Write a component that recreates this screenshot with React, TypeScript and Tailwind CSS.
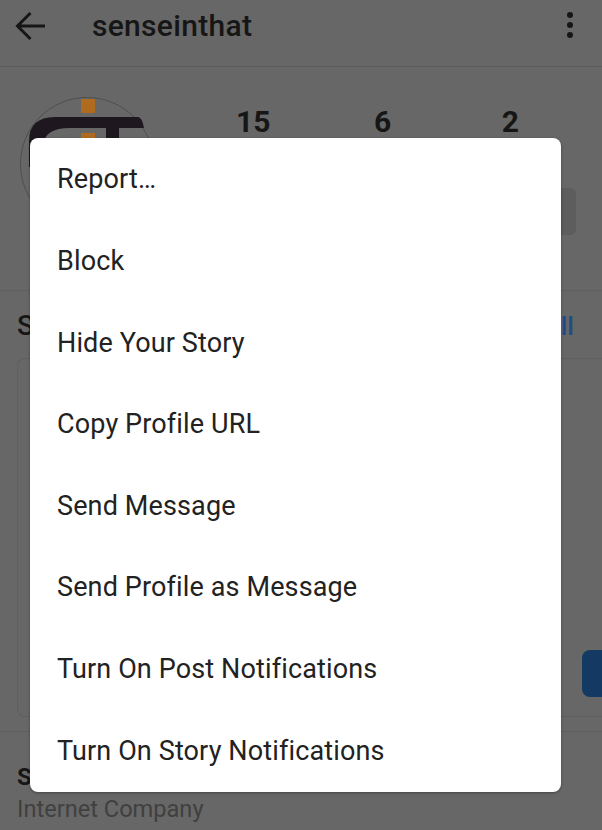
import React from "react";

const items = [
  "Report…",
  "Block",
  "Hide Your Story",
  "Copy Profile URL",
  "Send Message",
  "Send Profile as Message",
  "Turn On Post Notifications",
  "Turn On Story Notifications",
];

function Logo() {
  return (
    <svg width="134" height="134" viewBox="0 0 134 134" className="shrink-0">
      <circle cx="67" cy="67" r="66.5" fill="none" stroke="#4f4f4f" strokeWidth="1" />
      <rect x="61" y="2" width="14" height="14" fill="#b06c1e" />
      <rect x="61" y="36" width="14" height="14" fill="#b06c1e" />
      <path d="M9 70 V44 Q9 20 35 20 H118 Q122 20 124 31 H50 Q24 31 24 48 V70 Z" fill="#1e1720" />
      <rect x="86" y="28" width="13" height="30" fill="#1e1720" />
    </svg>
  );
}

export default function App() {
  return (
    <div className="relative flex h-[830px] w-[602px] flex-col overflow-hidden bg-[#676767] font-['Roboto',sans-serif]">
      <header className="flex h-[67px] shrink-0 items-start border-b border-[#5a5a5a] pl-[15px] pr-[29px] pt-[11px]">
        <svg width="31" height="30" viewBox="0 0 31 30" fill="none" stroke="#161616" strokeWidth="3" className="shrink-0">
          <path d="M30 15 H3 M15.5 2 L2.5 15 L15.5 28" />
        </svg>
        <span className="ml-[46px] text-[30px] font-medium leading-[30px] tracking-[0.3px] text-[#161616]">senseinthat</span>
        <div className="ml-auto mt-[1px] flex flex-col gap-[4px]">
          <span className="h-[6px] w-[6px] rounded-full bg-[#161616]" />
          <span className="h-[6px] w-[6px] rounded-full bg-[#161616]" />
          <span className="h-[6px] w-[6px] rounded-full bg-[#161616]" />
        </div>
      </header>

      <section className="flex h-[224px] shrink-0 border-b border-[#5f5f5f] pl-[20px] pt-[30px]">
        <Logo />
        <div className="ml-[28px] flex w-[394px] flex-col pt-[10px]">
          <div className="grid grid-cols-3 text-center text-[30px] font-bold leading-[30px] text-[#161616]">
            <span className="pl-[11px]">15</span>
            <span className="pl-[7px]">6</span>
            <span className="pl-[0px]">2</span>
          </div>
          <div className="mt-[51px] h-[47px] w-full rounded-[6px] bg-[#5d5d5d]" />
        </div>
      </section>

      <div className="flex h-[67px] shrink-0 items-center justify-between pl-[17px] pr-[28px] pt-[2px]">
        <span className="text-[28px] font-medium leading-none text-[#161616]">S</span>
        <span className="text-[26px] font-medium leading-none text-[#1f4e85]">ll</span>
      </div>

      <div className="ml-[17px] flex h-[359px] shrink-0 flex-col items-end rounded-l-[8px] border border-r-0 border-[#5f5f5f] pt-[291px]">
        <div className="h-[47px] w-[20px] rounded-l-[8px] bg-[#143a63]" />
      </div>

      <div className="mt-[14px] flex flex-col border-t border-[#5f5f5f] pl-[17px] pt-[31px]">
        <span className="text-[24px] font-bold leading-[28px] text-[#161616]">S</span>
        <span className="mt-[4px] text-[23.6px] leading-[28px] text-[#404040]">Internet Company</span>
      </div>

      <div className="absolute left-[30px] top-[138px] flex h-[654px] w-[531px] flex-col rounded-[8px] bg-white pt-[1px] shadow-[0_1px_3px_rgba(0,0,0,0.35)]">
        {items.map((t) => (
          <div key={t} className="flex h-[81.65px] items-center pl-[27px] text-[27px] leading-none tracking-[0.13px] text-[#222222]">
            {t}
          </div>
        ))}
      </div>
    </div>
  );
}
